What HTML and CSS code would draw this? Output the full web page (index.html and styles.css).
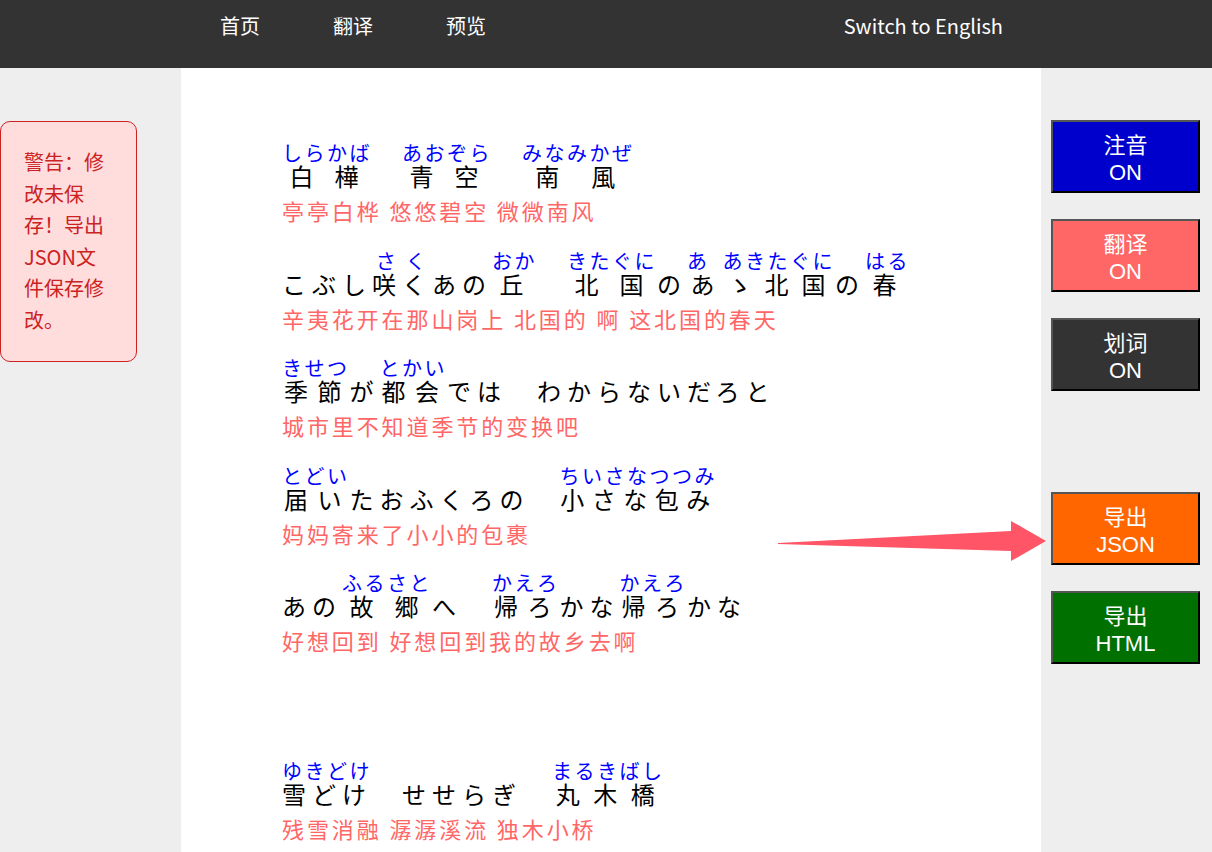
FILE: index.html
```html
<!DOCTYPE html>
<html lang="zh">
<head>
<meta charset="utf-8">
<title>歌词</title>
<link rel="stylesheet" href="styles.css">
</head>
<body>
<header class="nav">
  <div class="nav-links">
    <a class="nav-link">首页</a>
    <a class="nav-link">翻译</a>
    <a class="nav-link">预览</a>
  </div>
  <a class="lang">Switch to English</a>
</header>
<div class="layout">
  <aside class="left">
    <div class="warning">警告：修改未保存！导出JSON文件保存修改。</div>
  </aside>
  <main class="content">
    <div class="line">
      <div class="jp"><span class="rb"><ruby>白樺<rt>しらかば</rt></ruby></span>　<span class="rb"><ruby>青空<rt>あおぞら</rt></ruby></span>　<span class="rb"><ruby>南風<rt>みなみかぜ</rt></ruby></span></div>
      <div class="zh">亭亭白桦 悠悠碧空 微微南风</div>
    </div>
    <div class="line">
      <div class="jp">こぶし<span class="rb"><ruby>咲く<rt>さく</rt></ruby></span>あの<span class="rb"><ruby>丘<rt>おか</rt></ruby></span>　<span class="rb"><ruby>北国<rt>きたぐに</rt></ruby></span>の<span class="rb"><ruby>あゝ北国<rt>あ あきたぐに</rt></ruby></span>の<span class="rb"><ruby>春<rt>はる</rt></ruby></span></div>
      <div class="zh">辛夷花开在那山岗上 北国的 啊 这北国的春天</div>
    </div>
    <div class="line">
      <div class="jp"><span class="rb"><ruby>季節<rt>きせつ</rt></ruby></span>が<span class="rb"><ruby>都会<rt>とかい</rt></ruby></span>では　わからないだろと</div>
      <div class="zh">城市里不知道季节的变换吧</div>
    </div>
    <div class="line">
      <div class="jp"><span class="rb"><ruby>届い<rt>とどい</rt></ruby></span>たおふくろの　<span class="rb"><ruby>小さな包み<rt>ちいさなつつみ</rt></ruby></span></div>
      <div class="zh">妈妈寄来了小小的包裹</div>
    </div>
    <div class="line">
      <div class="jp">あの<span class="rb"><ruby>故郷<rt>ふるさと</rt></ruby></span>へ　<span class="rb"><ruby>帰ろ<rt>かえろ</rt></ruby></span>かな<span class="rb"><ruby>帰ろ<rt>かえろ</rt></ruby></span>かな</div>
      <div class="zh">好想回到 好想回到我的故乡去啊</div>
    </div>
    <div class="line-break"></div>
    <div class="line">
      <div class="jp"><span class="rb"><ruby>雪どけ<rt>ゆきどけ</rt></ruby></span>　せせらぎ　<span class="rb"><ruby>丸木橋<rt>まるきばし</rt></ruby></span></div>
      <div class="zh">残雪消融 潺潺溪流 独木小桥</div>
    </div>
  </main>
  <aside class="right">
    <div class="btn-group">
      <button class="btn btn-blue">注音<br>ON</button>
      <button class="btn btn-red">翻译<br>ON</button>
      <button class="btn btn-dark">划词<br>ON</button>
    </div>
    <div class="btn-group export">
      <button class="btn btn-orange">导出<br>JSON</button>
      <button class="btn btn-green">导出<br>HTML</button>
    </div>
  </aside>
</div>
<svg class="arrow" width="280" height="50" viewBox="0 0 280 50">
  <polygon points="0,23 233,11 233,1 268,21 233,41 233,31 0,24" fill="#ff5566"/>
</svg>
</body>
</html>
```
FILE: styles.css
```css
* { box-sizing: border-box; }
html, body { margin: 0; padding: 0; }
body {
  background: #eeeeee;
  font-family: "Noto Sans CJK SC", "Noto Sans", sans-serif;
  position: relative;
}
.nav {
  height: 68px;
  background: #333333;
  display: flex;
  align-items: flex-start;
  padding: 11px 209px 0 220px;
  color: #ffffff;
  font-size: 20px;
  line-height: 30px;
}
.nav-links { display: flex; gap: 73px; }
.nav-link, .lang { color: #ffffff; text-decoration: none; }
.lang { margin-left: auto; }
.layout {
  display: flex;
  align-items: stretch;
  min-height: 784px;
}
.left {
  width: 181px;
  flex: none;
  padding-top: 53px;
}
.warning {
  width: 137px;
  background: #ffdddd;
  border: 1px solid #cc2222;
  border-radius: 10px;
  color: #cc2222;
  font-size: 20px;
  line-height: 31.5px;
  padding: 24px 28px 26px 23px;
}
.content {
  width: 860px;
  flex: none;
  background: #ffffff;
  padding: 75px 0 0 101px;
}
.line { margin-bottom: 23.5px; }
.jp {
  font-family: "Noto Sans CJK JP", sans-serif;
  font-size: 24px;
  letter-spacing: 6px;
  line-height: 34px;
  color: #000000;
}
.rb { display: inline-block; }
.jp rt {
  font-size: 20px;
  letter-spacing: 2.5px;
  word-spacing: 6px;
  color: #0000ff;
  line-height: 23px;
}
.zh {
  font-family: "Noto Sans CJK SC", sans-serif;
  font-size: 22px;
  letter-spacing: 2.9px;
  line-height: 34px;
  color: #ff6666;
}
.line-break { height: 80.5px; }
.right {
  flex: 1;
  padding: 52px 12px 0 10px;
}
.btn-group { display: flex; flex-direction: column; gap: 26px; }
.export { margin-top: 101px; }
.btn {
  width: 149px;
  height: 73px;
  border: 2px solid;
  border-color: #555555 #000000 #000000 #555555;
  color: #ffffff;
  font-family: "Liberation Sans", "Noto Sans CJK SC", sans-serif;
  font-size: 22px;
  line-height: 27px;
  padding: 4px 0 0;
  cursor: pointer;
}
.btn-blue { background: #0000cc; }
.btn-red { background: #ff6666; }
.btn-dark { background: #333333; }
.btn-orange { background: #ff6600; }
.btn-green { background: #007000; }
.arrow {
  position: absolute;
  left: 778px;
  top: 520px;
}
```
